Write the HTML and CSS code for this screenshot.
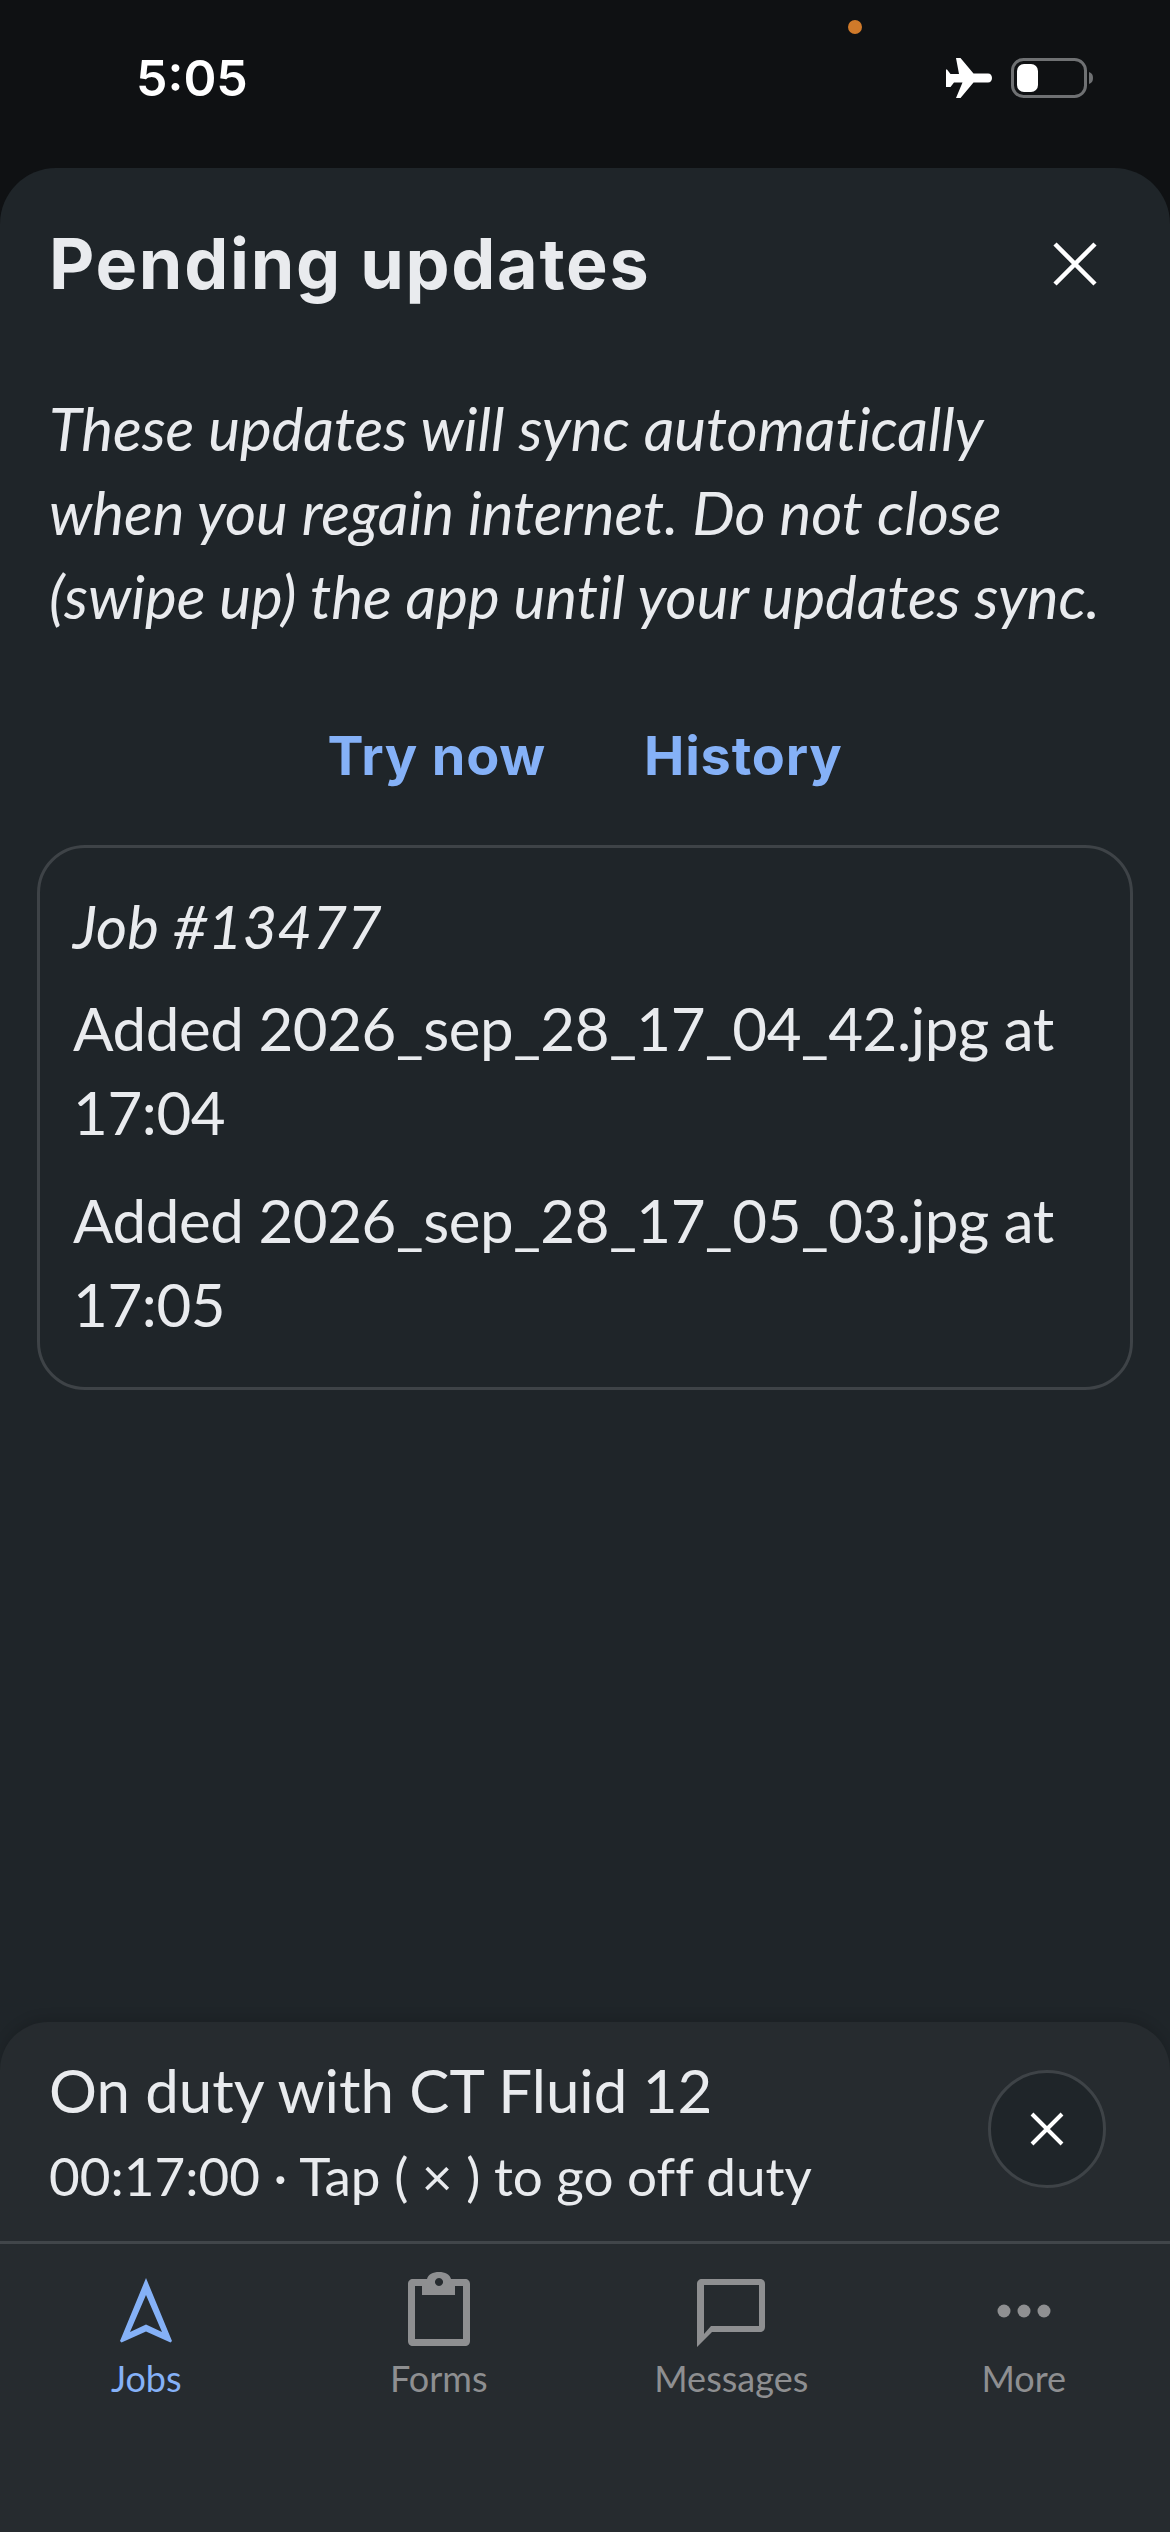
FILE: index.html
```html
<!DOCTYPE html>
<html lang="en">
  <head>
    <meta charset="UTF-8" />
    <meta name="viewport" content="width=device-width, initial-scale=1.0" />
    <title>Pending updates</title>
    <link rel="stylesheet" href="styles.css">
  </head>
  <body>
    <div class="status-bar">
      <span class="time">5:05</span>
      <span class="rec-dot"></span>
      <div class="status-icons">
        <svg class="plane" viewBox="0 0 46 40" width="46" height="40">
          <path fill="#fff" d="M10 0h4.500l13 15.500h14.500c2.500 0 4 2 4 4.500s-1.500 4.500-4 4.500h-14.500l-13 15.500h-4.500l6.500-15.500h-8.500l-3.500 4.500h-4.500v-17.500l1 0 3.500 4.500h8.500z" />
        </svg>
        <svg class="battery" viewBox="0 0 83 40" width="83" height="40">
          <rect x="1.500" y="1.500" width="73" height="37" rx="11" fill="none" stroke="#6f7173" stroke-width="3" />
          <rect x="6" y="6" width="21" height="28" rx="7" fill="#fff" />
          <path fill="#6f7173" d="M78 14c3 1 4 3 4 6s-1 5-4 6z" />
        </svg>
      </div>
    </div>

    <div class="sheet">
      <div class="sheet-head">
        <h1>Pending updates</h1>
        <svg class="close" viewBox="0 0 44 44" width="44" height="44">
          <path d="M2 2l40 40M42 2l-40 40" stroke="#fff" stroke-width="4.500" />
        </svg>
      </div>
      <p class="note">These updates will sync automatically when you regain internet. Do not close (swipe up) the app until your updates sync.</p>
      <div class="actions">
        <a>Try now</a>
        <a>History</a>
      </div>
      <div class="job-card">
        <div class="job-name">Job #13477</div>
        <div class="job-line">Added 2026_sep_28_17_04_42.jpg at 17:04</div>
        <div class="job-line">Added 2026_sep_28_17_05_03.jpg at 17:05</div>
      </div>

      <div class="bottom">
        <div class="duty">
          <div class="duty-text">
            <div class="duty-title">On duty with CT Fluid 12</div>
            <div class="duty-sub">00:17:00 · Tap ( × ) to go off duty</div>
          </div>
          <div class="duty-btn">
            <svg viewBox="0 0 34 34" width="34" height="34">
              <path d="M2 2l30 30M32 2l-30 30" stroke="#fff" stroke-width="4" />
            </svg>
          </div>
        </div>
        <div class="tabs">
          <div class="tab active">
            <svg viewBox="0 0 60 76" width="60" height="76">
              <path fill="#85b1f7" fill-rule="evenodd" d="M30 7l26 63-1.500 1.500-24.500-11-24.500 11-1.500-1.500zM30 24l-16 37 16-7.500 16 7.500z" />
            </svg>
            <span>Jobs</span>
          </div>
          <div class="tab">
            <svg viewBox="0 0 70 76" width="70" height="76">
              <path fill="#8e8f91" fill-rule="evenodd" d="M9 8h14c1-4.500 6-7 12-7s11 2.500 12 7h14c3 0 5 2 5 5v57c0 3-2 5-5 5h-52c-3 0-5-2-5-5v-57c0-3 2-5 5-5zM11 15v53h48v-53h-8v9h-33v-9zM35 7a4 4 0 1 0 .01 0z" />
            </svg>
            <span>Forms</span>
          </div>
          <div class="tab">
            <svg viewBox="0 0 70 76" width="70" height="76">
              <path fill="#8e8f91" fill-rule="evenodd" d="M8 8h57c3 0 5 2 5 5v43c0 3-2 5-5 5h-48l-15 15v-63c0-3 2-5 5-5zM9 14v49l7-8h48v-41z" transform="translate(-1 0)" />
            </svg>
            <span>Messages</span>
          </div>
          <div class="tab">
            <svg viewBox="0 0 60 76" width="60" height="76">
              <g fill="#8e8f91">
                <circle cx="10" cy="40" r="6.500" />
                <circle cx="30" cy="40" r="6.500" />
                <circle cx="50" cy="40" r="6.500" />
              </g>
            </svg>
            <span>More</span>
          </div>
        </div>
      </div>
    </div>
  </body>
</html>
```

FILE: styles.css
```css
* {
  box-sizing: border-box;
}
body {
  margin: 0;
  height: 2532px;
  display: flex;
  flex-direction: column;
  background: #0f1113;
  color: #e9ebee;
  font-family: Lato, "Open Sans", sans-serif;
  font-variant-ligatures: none;
  overflow: hidden;
}
.status-bar {
  height: 168px;
  flex: none;
  display: flex;
  padding: 52px 76px 0 136px;
  position: relative;
}
.time {
  font: 600 50px/52px Inter, sans-serif;
  color: #fff;
}
.rec-dot {
  position: absolute;
  left: 848px;
  top: 20px;
  width: 14px;
  height: 14px;
  border-radius: 50%;
  background: #d07a2a;
}
.status-icons {
  margin-left: auto;
  display: flex;
  gap: 19px;
  padding-top: 6px;
}
.sheet {
  flex: 1;
  display: flex;
  flex-direction: column;
  background: #1f2529;
  border-radius: 56px 56px 0 0;
}
.sheet-head {
  display: flex;
  justify-content: space-between;
  align-items: center;
  padding: 60px 73px 0 49px;
}
h1 {
  margin: 0;
  font: 700 70px/72px Inter, sans-serif;
  letter-spacing: 1.700px;
  color: #e9ebee;
}
.note {
  margin: 86px 0 0;
  padding: 0 49px;
  font-style: italic;
  font-size: 60px;
  line-height: 84px;
  letter-spacing: -0.050px;
}
.actions {
  display: flex;
  justify-content: center;
  gap: 98px;
  margin-top: 88px;
  font: 700 54px/60px Inter, sans-serif;
  letter-spacing: 0.800px;
  color: #85b1f7;
}
.job-card {
  margin: 59px 37px 0;
  height: 545px;
  padding: 36px 33px 0;
  border: 3px solid #3e4347;
  border-radius: 48px;
  font-size: 60px;
  line-height: 84px;
}
.job-name {
  font-style: italic;
  margin-bottom: 18px;
}
.job-line {
  margin-bottom: 24px;
  letter-spacing: -0.400px;
}
.bottom {
  margin-top: auto;
  height: 510px;
  background: #262b2f;
  border-radius: 48px 48px 0 0;
  box-shadow: 0 -4px 12px #00000022;
}
.duty {
  height: 222px;
  display: flex;
  align-items: center;
  justify-content: space-between;
  padding: 0 64px 6px 49px;
  border-bottom: 3px solid #41464a;
}
.duty-title {
  font-size: 60px;
  line-height: 84px;
}
.duty-sub {
  margin-top: 11px;
  font-size: 53px;
  line-height: 66px;
}
.duty-btn {
  width: 118px;
  height: 118px;
  border: 3px solid #3e4347;
  border-radius: 50%;
  background: #1f2529;
  display: flex;
  align-items: center;
  justify-content: center;
}
.tabs {
  display: grid;
  grid-template-columns: repeat(4, 1fr);
  padding-top: 27px;
}
.tab {
  display: flex;
  flex-direction: column;
  align-items: center;
  gap: 8px;
  color: #8e8f91;
  font-size: 36px;
  line-height: 46px;
}
.tab.active {
  color: #85b1f7;
}
```
